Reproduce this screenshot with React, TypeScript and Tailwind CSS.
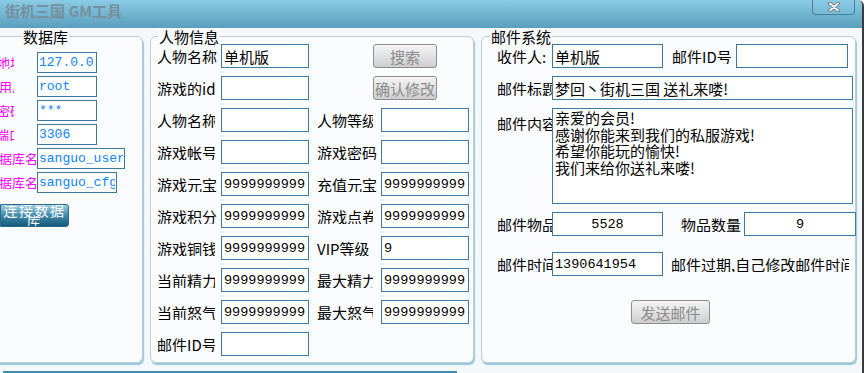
const cjk = "font-['Noto_Sans_CJK_SC',sans-serif]";
const mono = "font-['Liberation_Mono','Noto_Sans_CJK_SC',monospace]";
const box = `h-[24px] shrink-0 border border-[#3a7b9c] bg-white px-[2px] text-[13.5px] leading-none text-black outline-none ${mono}`;
const grayBtn =
  "h-[24px] shrink-0 rounded-[3px] border border-[#8f8f8f] bg-gradient-to-b from-[#f4f4f4] via-[#e2e2e2] to-[#cdcdcd] text-[15px] leading-none text-[#8a8a8a]";

function Field({ value, w, center }: { value: string; w: string; center?: boolean }) {
  return <input readOnly value={value} className={`${box} ${w} ${center ? "text-center" : ""}`} />;
}

function Label({ text, w = "w-[57px]", mr = "mr-[7px]" }: { text: string; w?: string; mr?: string }) {
  return (
    <div className={`${w} ${mr} shrink-0 overflow-hidden whitespace-nowrap text-[15px] leading-none text-black`}>
      {text}
    </div>
  );
}

function GroupTitle({ text, left }: { text: string; left: string }) {
  return (
    <span className={`absolute -top-[8px] ${left} bg-[#f7fafd] px-[1px] text-[15px] leading-none text-black`}>
      {text}
    </span>
  );
}

const panel =
  "relative h-[327px] shrink-0 rounded-[6px] border border-[#c3cbd1] bg-[#fafcfe] shadow-[1px_2px_1px_rgba(70,160,195,0.55)]";

function DbRow({ label, value, w, shift }: { label: string; value: string; w: string; shift: string }) {
  return (
    <div className="flex h-[21px] items-center">
      <div className="w-[37px] shrink-0">
        <div className={`overflow-hidden whitespace-nowrap text-[13px] leading-none text-[#ff00ff] ${shift}`}>{label}</div>
      </div>
      <input
        readOnly
        value={value}
        className={`h-[21px] ${w} shrink-0 border border-[#3a7b9c] bg-white px-[1px] text-[13px] leading-none text-[#0a84ff] outline-none ${mono}`}
      />
    </div>
  );
}

function DatabasePanel() {
  return (
    <div className={`${panel} -ml-[12px] w-[155px] pl-[11px] pt-[15px]`}>
      <GroupTitle text="数据库" left="left-[33px]" />
      <div className="flex flex-col gap-[3px]">
        <DbRow label="地址" value="127.0.0.1" w="w-[60px]" shift="w-[14px] [text-indent:-3px]" />
        <DbRow label="用户" value="root" w="w-[60px]" shift="w-[14px] [text-indent:-1px]" />
        <DbRow label="密码" value="***" w="w-[60px]" shift="w-[14px] [text-indent:-3px]" />
        <DbRow label="端口" value="3306" w="w-[60px]" shift="w-[14px] [text-indent:-4px]" />
        <DbRow label="数据库名" value="sanguo_user" w="w-[88px]" shift="w-[37px] [text-indent:-14px]" />
        <DbRow label="数据库名" value="sanguo_cfg" w="w-[80px]" shift="w-[37px] [text-indent:-14px]" />
      </div>
      <button className="mt-[11px] h-[23px] w-[69px] overflow-hidden rounded-r-[3px] border border-[#2b6a88] bg-gradient-to-b from-[#9fd0e2] via-[#3f8aab] to-[#145a7b] text-center text-[14px] leading-[11px] tracking-[1.5px] text-white">
        连接数据库
      </button>
    </div>
  );
}

type Cell = { label: string; value: string; clip?: boolean };

function PlayerRow({ a, b }: { a: Cell; b?: Cell }) {
  return (
    <div className="flex h-[24px] items-center">
      <Label text={a.label} w={a.clip ? "w-[58px]" : "w-[62px]"} mr={a.clip ? "mr-[6px]" : "mr-[2px]"} />
      <Field value={a.value} w="w-[88px]" />
      {b && (
        <>
          <div className="w-[8px] shrink-0" />
          <Label text={b.label} w={b.clip ? "w-[56px]" : "w-[60px]"} mr={b.clip ? "mr-[8px]" : "mr-[4px]"} />
          <Field value={b.value} w="w-[88px]" />
        </>
      )}
    </div>
  );
}

function PlayerPanel() {
  const n = "9999999999";
  return (
    <div className={`${panel} w-[324px] pl-[6px] pt-[7px]`}>
      <GroupTitle text="人物信息" left="left-[7px]" />
      <div className="flex flex-col gap-[8px]">
        <div className="flex h-[24px] items-center">
          <Label text="人物名称" w="w-[62px]" mr="mr-[2px]" />
          <input readOnly value="单机版" className={`${box} w-[88px] ${cjk} text-[15px]`} />
          <button className={`${grayBtn} ml-[64px] w-[64px]`}>搜索</button>
        </div>
        <div className="flex h-[24px] items-center">
          <Label text="游戏的id" w="w-[59px]" mr="mr-[5px]" />
          <Field value="" w="w-[88px]" />
          <button className={`${grayBtn} ml-[64px] w-[64px]`}>确认修改</button>
        </div>
        <PlayerRow a={{ label: "人物名称", value: "", clip: true }} b={{ label: "人物等级", value: "", clip: true }} />
        <PlayerRow a={{ label: "游戏帐号", value: "", clip: true }} b={{ label: "游戏密码", value: "" }} />
        <PlayerRow a={{ label: "游戏元宝", value: n }} b={{ label: "充值元宝", value: n }} />
        <PlayerRow a={{ label: "游戏积分", value: n }} b={{ label: "游戏点卷", value: n, clip: true }} />
        <PlayerRow a={{ label: "游戏铜钱", value: n, clip: true }} b={{ label: "VIP等级", value: "9" }} />
        <PlayerRow a={{ label: "当前精力", value: n, clip: true }} b={{ label: "最大精力", value: n, clip: true }} />
        <PlayerRow a={{ label: "当前怒气", value: n, clip: true }} b={{ label: "最大怒气", value: n, clip: true }} />
        <PlayerRow a={{ label: "邮件ID号", value: "", clip: true }} />
      </div>
    </div>
  );
}

function MailLabel({ text, w = "w-[55px]", top }: { text: string; w?: string; top?: boolean }) {
  return (
    <div
      className={`${w} shrink-0 overflow-hidden whitespace-nowrap text-[15px] leading-none text-black ${top ? "self-start pt-[8px]" : ""}`}
    >
      {text}
    </div>
  );
}

function MailPanel() {
  return (
    <div className={`${panel} w-[375px] pl-[15px] pt-[7px]`}>
      <GroupTitle text="邮件系统" left="left-[8px]" />
      <div className="flex flex-col">
        <div className="flex h-[24px] items-center">
          <MailLabel text="收件人:" />
          <input readOnly value="单机版" className={`${box} w-[111px] ${cjk} text-[15px]`} />
          <div className="w-[9px] shrink-0" />
          <MailLabel text="邮件ID号" w="w-[64px]" />
          <Field value="" w="w-[112px]" />
        </div>
        <div className="mt-[8px] flex h-[24px] items-center">
          <MailLabel text="邮件标题" />
          <input readOnly value="梦回丶街机三国 送礼来喽!" className={`${box} w-[301px] ${cjk} text-[15px]`} />
        </div>
        <div className="mt-[8px] flex">
          <MailLabel text="邮件内容" top />
          <textarea
            readOnly
            value={"亲爱的会员!\n感谢你能来到我们的私服游戏!\n希望你能玩的愉快!\n我们来给你送礼来喽!"}
            className={`h-[96px] w-[301px] shrink-0 resize-none border border-[#3a7b9c] bg-white px-[2px] pt-[1px] text-[15px] leading-[16.7px] text-black outline-none ${cjk}`}
          />
        </div>
        <div className="mt-[8px] flex h-[24px] items-center">
          <MailLabel text="邮件物品" />
          <Field value="5528" w="w-[111px]" center />
          <div className="w-[18px] shrink-0" />
          <MailLabel text="物品数量" w="w-[63px]" />
          <Field value="9" w="w-[112px]" center />
        </div>
        <div className="mt-[16px] flex h-[24px] items-center">
          <MailLabel text="邮件时间" />
          <Field value="1390641954" w="w-[111px]" />
          <div className="w-[8px] shrink-0" />
          <MailLabel text="邮件过期,自己修改邮件时间" w="w-[178px]" />
        </div>
        <div className="mt-[24px] flex pl-[134px]">
          <button className={`${grayBtn} w-[79px]`}>发送邮件</button>
        </div>
      </div>
    </div>
  );
}

function CloseGlyph() {
  return (
    <svg width="14" height="10" viewBox="0 0 14 10">
      <path d="M3 1.5 L11 8.5 M11 1.5 L3 8.5" stroke="#6b6b6b" strokeWidth="3.6" strokeLinecap="round" />
      <path d="M3 1.5 L11 8.5 M11 1.5 L3 8.5" stroke="#ffffff" strokeWidth="1.8" strokeLinecap="round" />
    </svg>
  );
}

export default function App() {
  return (
    <div className={`flex h-[373px] w-[866px] overflow-hidden bg-white ${cjk}`}>
      <div className="flex h-[373px] w-[864px] shrink-0 flex-col overflow-hidden rounded-tr-[6px] border-r-[2px] border-[#3a3a3a] bg-[#f4f8fb]">
        <div className="flex h-[28px] shrink-0 items-start justify-between bg-gradient-to-b from-[#8acbe5] to-[#5a9fbe]">
          <div className="pl-[5px] pt-[3px] text-[15px] font-bold leading-none text-[#75909c]">街机三国 GM工具</div>
          <div className="mr-[7px] flex h-[15px] w-[43px] items-center justify-center rounded-b-[4px] border border-t-0 border-[#4a7f98] bg-gradient-to-b from-[#8acbe5] to-[#74b9d6]">
            <CloseGlyph />
          </div>
        </div>
        <div className="mt-[8px] flex gap-[7px]">
          <DatabasePanel />
          <PlayerPanel />
          <MailPanel />
        </div>
        <div className="ml-[3px] mt-[8px] h-[2px] w-[454px] bg-[#3f8db0]" />
      </div>
    </div>
  );
}
